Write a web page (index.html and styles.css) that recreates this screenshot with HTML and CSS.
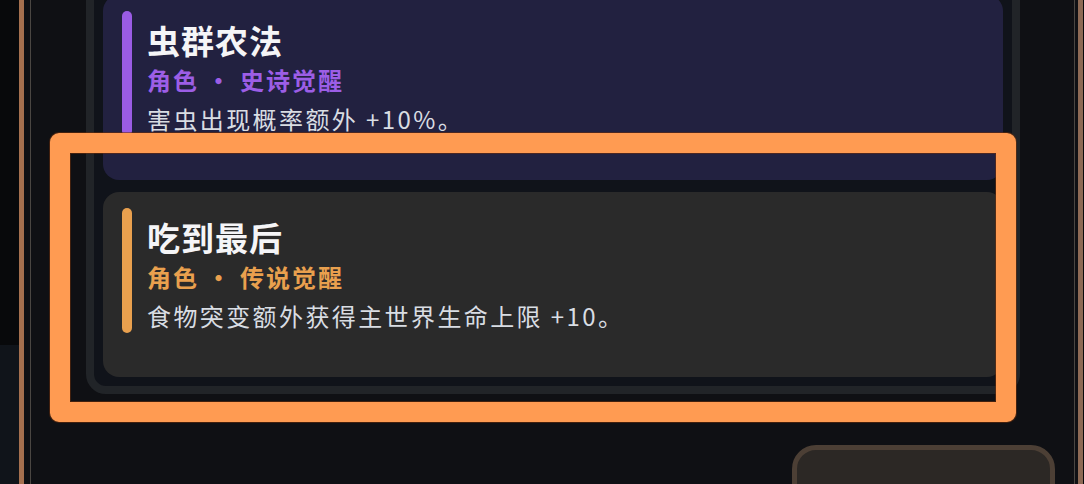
FILE: index.html
```html
<!DOCTYPE html>
<html lang="zh-CN">
<head>
<meta charset="utf-8">
<title>觉醒</title>
<link rel="stylesheet" href="styles.css">
</head>
<body>
<div class="screen">
  <div class="backdrop-bottom"></div>
  <div class="dialog">
    <div class="dialog-inner">
      <div class="panel">
        <div class="card card-epic">
          <div class="bar"></div>
          <div class="text">
            <div class="title">虫群农法</div>
            <div class="sub">角色 · 史诗觉醒</div>
            <div class="desc">害虫出现概率额外 +10%。</div>
          </div>
        </div>
        <div class="card card-legend">
          <div class="bar"></div>
          <div class="text">
            <div class="title">吃到最后</div>
            <div class="sub">角色 · 传说觉醒</div>
            <div class="desc">食物突变额外获得主世界生命上限 +10。</div>
          </div>
        </div>
      </div>
      <div class="footer">
        <div class="btn">确定</div>
      </div>
    </div>
  </div>
  <div class="highlight"></div>
</div>
</body>
</html>
```

FILE: styles.css
```css
html, body {
  margin: 0;
  padding: 0;
  background: #0f1014;
}

.screen {
  position: relative;
  width: 1084px;
  height: 484px;
  overflow: hidden;
  background: #08090b;
  font-family: "Noto Sans CJK SC", "Noto Sans", sans-serif;
}

.backdrop-bottom {
  position: absolute;
  left: 0;
  top: 345px;
  width: 19px;
  height: 139px;
  background: #10141a;
}

.dialog {
  position: relative;
  margin-left: 19px;
  width: 1045px;
  height: 560px;
  margin-top: -40px;
  border-left: 5px solid #a5704f;
  border-right: 5px solid #8e6a55;
  background: #0f1014;
  padding-left: 6px;
  padding-right: 3px;
}

.dialog-inner {
  height: 100%;
  border-left: 1px solid #4a4642;
  border-right: 1px solid #4a4642;
  background: #0f1014;
  padding-top: 18px;
}

.panel {
  margin-left: 55px;
  margin-right: 54px;
  border: 8px solid #212428;
  border-radius: 20px;
  background: #10131a;
  padding: 9px;
  display: flex;
  flex-direction: column;
  gap: 12px;
}

.card {
  height: 185px;
  border-radius: 16px;
  display: flex;
  padding: 16px 19px;
  box-sizing: border-box;
}

.card-epic {
  background: #222140;
}

.card-legend {
  background: #2a2a2a;
}

.bar {
  flex: none;
  width: 10px;
  height: 125px;
  border-radius: 5px;
}

.card-epic .bar {
  background: #9a5ce4;
}

.card-legend .bar {
  background: #e9a04e;
}

.text {
  margin-left: 15px;
  padding-top: 6px;
}

.title {
  font-size: 33px;
  font-weight: 700;
  line-height: 46px;
  color: #f5f5f7;
  letter-spacing: 1px;
}

.sub {
  font-size: 24px;
  font-weight: 700;
  line-height: 34px;
  letter-spacing: 2px;
  white-space: pre;
}

.card-epic .sub {
  color: #9c5ee6;
}

.card-legend .sub {
  color: #e9a04e;
}

.desc {
  font-size: 24px;
  line-height: 44px;
  letter-spacing: 2.4px;
  color: #d9dde3;
}

.footer {
  display: flex;
  justify-content: flex-end;
  padding-right: 19px;
  margin-top: 51px;
}

.btn {
  width: 253px;
  height: 80px;
  border: 5px solid #4c3f35;
  border-radius: 24px;
  background: #2c2825;
  color: #f2f2f2;
  font-size: 30px;
  font-weight: 700;
  text-align: center;
  line-height: 80px;
  padding-top: 8px;
  box-sizing: content-box;
}

.highlight {
  position: absolute;
  left: 50px;
  top: 133px;
  width: 926px;
  height: 249px;
  border: 20px solid #ff9b52;
  border-radius: 9px;
  box-shadow: 0 0 0 1px rgba(110, 45, 10, 0.55), inset 0 0 0 1px rgba(110, 45, 10, 0.55);
}
```
